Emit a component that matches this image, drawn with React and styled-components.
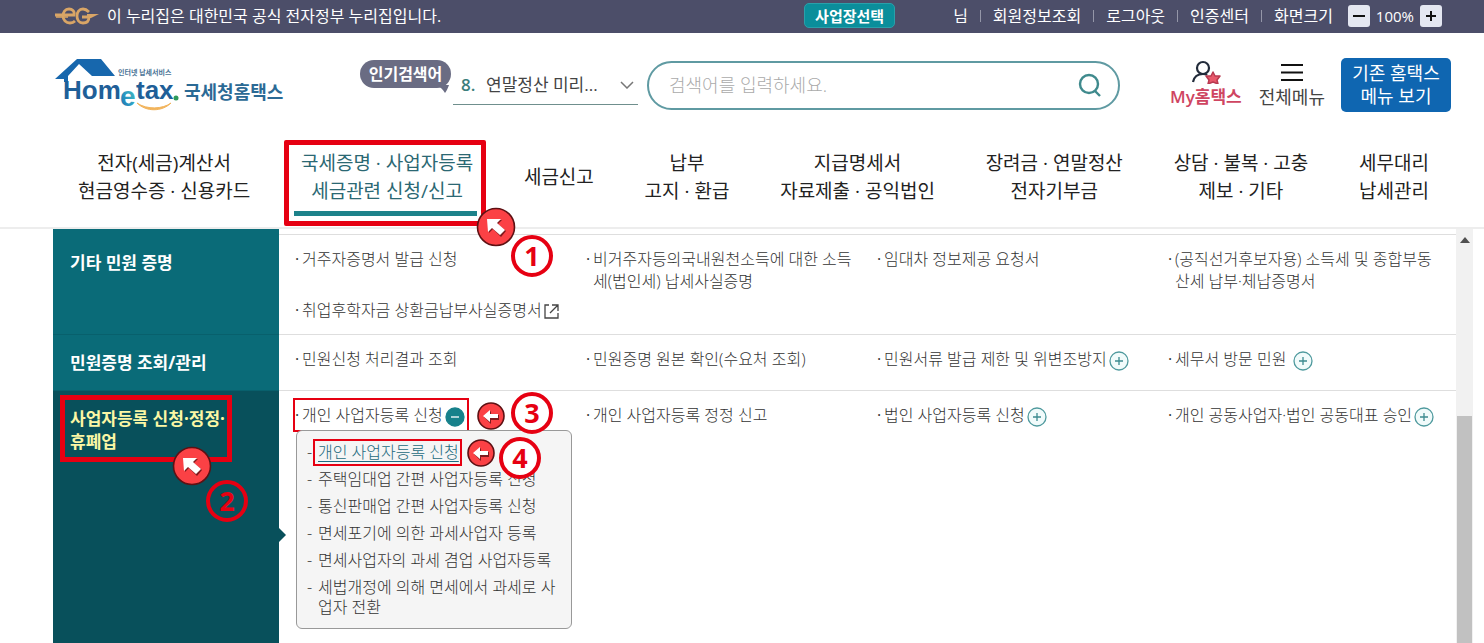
import React from 'react';
import styled, { createGlobalStyle, css } from 'styled-components';

const topLinks = ['회원정보조회', '로그아웃', '인증센터', '화면크기'];

const navItems = [
  { lines: ['전자(세금)계산서', '현금영수증 · 신용카드'] },
  { lines: ['국세증명 · 사업자등록', '세금관련 신청/신고'], active: true },
  { lines: ['세금신고'] },
  { lines: ['납부', '고지 · 환급'] },
  { lines: ['지급명세서', '자료제출 · 공익법인'] },
  { lines: ['장려금 · 연말정산', '전자기부금'] },
  { lines: ['상담 · 불복 · 고충', '제보 · 기타'] },
  { lines: ['세무대리', '납세관리'] },
];

const subItems = [
  '주택임대업 간편 사업자등록 신청',
  '통신판매업 간편 사업자등록 신청',
  '면세포기에 의한 과세사업자 등록',
  '면세사업자의 과세 겸업 사업자등록',
  '세법개정에 의해 면세에서 과세로 사업자 전환',
];

const App = () => {
  return (
    <Page>
      <GlobalStyle />
      <TopBar>
        <EgovMark />
        <TopText>이 누리집은 대한민국 공식 전자정부 누리집입니다.</TopText>
        <PlaceButton type="button">사업장선택</PlaceButton>
        <TopMenu>
          <li>님</li>
          {topLinks.map((text) => (
            <li key={text}>
              <a href="#top">{text}</a>
            </li>
          ))}
        </TopMenu>
        <ZoomBox>
          <ZoomButton type="button" aria-label="화면 축소">
            <svg width="14" height="14" viewBox="0 0 14 14">
              <path d="M1 7h12" stroke="#111" strokeWidth="2" />
            </svg>
          </ZoomButton>
          <span>100%</span>
          <ZoomButton type="button" aria-label="화면 확대">
            <svg width="14" height="14" viewBox="0 0 14 14">
              <path d="M2 7h10M7 2v10" stroke="#111" strokeWidth="2" />
            </svg>
          </ZoomButton>
        </ZoomBox>
      </TopBar>

      <Header>
        <HeaderRow>
          <LogoLink href="#home">
            <HometaxMark />
            <span>국세청홈택스</span>
          </LogoLink>
          <HotLabel htmlFor="hot">
            인기검색어
            <svg width="12" height="8" viewBox="0 0 12 8">
              <path d="M0 0h12c-1 3-2 5-4 8C6 5 4 2 0 1z" fill="#6a6c83" />
            </svg>
          </HotLabel>
          <HotBox>
            <b>8.</b>
            <select id="hot">
              <option>연말정산 미리...</option>
            </select>
            <svg width="14" height="8" viewBox="0 0 14 8">
              <path d="M1 1l6 6 6-6" fill="none" stroke="#777" strokeWidth="1.5" />
            </svg>
          </HotBox>
          <SearchBox>
            <input type="text" aria-label="검색어" placeholder="검색어를 입력하세요." />
            <button type="button" aria-label="검색">
              <svg width="24" height="24" viewBox="0 0 24 24">
                <circle cx="11" cy="11" r="9" fill="none" stroke="#3f8a8d" strokeWidth="2.4" />
                <path d="M17 18l5 5" stroke="#3f8a8d" strokeWidth="2.4" />
              </svg>
            </button>
          </SearchBox>
          <MyLink href="#my" $accent>
            <svg width="30" height="24" viewBox="0 0 30 24">
              <circle cx="12" cy="8" r="6" fill="none" stroke="#222b3a" strokeWidth="2.2" />
              <path d="M2 22c1-5 4-8 10-8 2 0 3 0 4 1" fill="none" stroke="#222b3a" strokeWidth="2.2" />
              <path
                d="M22 12l2 4 5 0-3 4 1 4-5-2-5 2 1-4-3-4 5 0z"
                fill="#e8596b"
                stroke="#b93a50"
                strokeWidth="1.5"
                strokeLinejoin="round"
              />
            </svg>
            My홈택스
          </MyLink>
          <MyLink href="#all">
            <svg width="24" height="24" viewBox="0 0 24 24">
              <path d="M1 5h22M1 12.5h22M1 20h22" stroke="#111" strokeWidth="2" />
            </svg>
            전체메뉴
          </MyLink>
          <OldButton type="button">
            기존 홈택스
            <br />
            메뉴 보기
          </OldButton>
        </HeaderRow>

        <Nav>
          {navItems.map((item) => (
            <NavLink key={item.lines[0]} href="#menu" $active={item.active}>
              {item.lines.map((line) => (
                <span key={line}>{line}</span>
              ))}
              {item.active && (
                <>
                  <NavFrame />
                  <Pin $x={195} $y={78}>
                    <CursorMark />
                  </Pin>
                  <Pin $x={231} $y={107}>
                    <StepNumber>1</StepNumber>
                  </Pin>
                </>
              )}
            </NavLink>
          ))}
        </Nav>
      </Header>

      <Body>
        <Menu>
          <Row>
            <Side $first>기타 민원 증명</Side>
            <Links $first>
              <Item text="거주자증명서 발급 신청" />
              <Item text="비거주자등의국내원천소득에 대한 소득세(법인세) 납세사실증명" />
              <Item text="임대차 정보제공 요청서" />
              <Item text="(공직선거후보자용) 소득세 및 종합부동산세 납부·체납증명서" />
              <Item text="취업후학자금 상환금납부사실증명서">
                <OutIcon />
              </Item>
            </Links>
          </Row>
          <Row>
            <Side>민원증명 조회/관리</Side>
            <Links>
              <Item text="민원신청 처리결과 조회" />
              <Item text="민원증명 원본 확인(수요처 조회)" />
              <Item text="민원서류 발급 제한 및 위변조방지">
                <Toggle />
              </Item>
              <Item text="세무서 방문 민원 ">
                <Toggle />
              </Item>
            </Links>
          </Row>
          <Row $open>
            <Side $active>
              <SideMark>
                사업자등록 신청·정정·
                <br />
                휴폐업
                <SideFrame />
                <Pin $x={122} $y={59}>
                  <CursorMark />
                </Pin>
                <Pin $x={157} $y={94}>
                  <StepNumber>2</StepNumber>
                </Pin>
              </SideMark>
            </Side>
            <Links>
              <Item text="개인 사업자등록 신청">
                <Toggle open />
                <SubMenu>
                  <li>
                    <SubCurrent href="#menu">
                      개인 사업자등록 신청
                      <SubFrame />
                    </SubCurrent>
                    <Pin $x={184} $y={22}>
                      <ArrowMark />
                    </Pin>
                    <Pin $x={223} $y={27}>
                      <StepNumber $filled>4</StepNumber>
                    </Pin>
                  </li>
                  {subItems.map((text) => (
                    <li key={text}>
                      <a href="#menu">{text}</a>
                    </li>
                  ))}
                </SubMenu>
                <ItemFrame />
                <Pin $x={199} $y={12}>
                  <ArrowMark />
                </Pin>
                <Pin $x={240} $y={9}>
                  <StepNumber $filled>3</StepNumber>
                </Pin>
              </Item>
              <Item text="개인 사업자등록 정정 신고" />
              <Item text="법인 사업자등록 신청">
                <Toggle />
              </Item>
              <Item text="개인 공동사업자·법인 공동대표 승인">
                <Toggle />
              </Item>
            </Links>
          </Row>
        </Menu>
        <ScrollBar>
          <svg width="10" height="6" viewBox="0 0 10 6">
            <path d="M5 0l5 6H0z" fill="#505050" />
          </svg>
          <ScrollThumb />
        </ScrollBar>
      </Body>
    </Page>
  );
};

const Item = ({ text, children }) => (
  <ItemBox>
    <a href="#menu">{text}</a>
    {children}
  </ItemBox>
);

const Toggle = ({ open }) => (
  <ToggleButton type="button" aria-label={open ? '하위메뉴 닫기' : '하위메뉴 열기'}>
    <svg width="20" height="20" viewBox="0 0 20 20">
      <circle cx="10" cy="10" r="9" fill={open ? '#17818b' : '#f1fbfb'} stroke={open ? '#17818b' : '#4f9a9e'} strokeWidth="1.3" />
      <path d={open ? 'M6 10h8' : 'M6 10h8M10 6v8'} stroke={open ? '#fff' : '#3c8b90'} strokeWidth="1.3" />
    </svg>
  </ToggleButton>
);

const OutIcon = () => (
  <InlineSvg width="17" height="16" viewBox="0 0 17 16">
    <path d="M6 2H2v13h13v-5M9 2h6v6M15 2L7 10" fill="none" stroke="#444" strokeWidth="1.3" />
  </InlineSvg>
);

const CursorMark = () => (
  <svg width="40" height="40" viewBox="0 0 40 40">
    <circle cx="20" cy="20" r="18.5" fill="#fb4145" stroke="#5e1013" strokeWidth="1.6" />
    <path d="M12 13h14l-4 4 8 7-5 6-8-8-4 4z" fill="#7d1a1e" />
    <path d="M11 12h14l-4 4 8 7-5 5-8-7-4 4z" fill="#fff" />
  </svg>
);

const ArrowMark = () => (
  <svg width="28" height="28" viewBox="0 0 28 28">
    <circle cx="14" cy="14" r="13" fill="#fb4145" stroke="#5e1013" strokeWidth="1.6" />
    <path d="M7 15l7-6v4h8v5h-8v4z" fill="#7d1a1e" />
    <path d="M6 14l7-6v4h8v4h-8v4z" fill="#fff" />
  </svg>
);

const EgovMark = () => (
  <svg width="46" height="20" viewBox="0 0 46 20">
    <g fill="none" stroke="#d9a566" strokeWidth="2.8">
      <path d="M2 9h19c1-4-2-6-5-6-4 0-6 3-6 7s3 7 7 7c2 0 4-1 5-2" />
      <path d="M36 6c-2-2-4-3-6-3-4 0-6 3-6 7s2 7 6 7 6-2 6-6h-7" />
      <path d="M3 11h12" strokeWidth="1.6" />
    </g>
    <path d="M34 8h12l-8 4h-4z" fill="#d9a566" />
  </svg>
);

const HometaxMark = () => (
  <svg width="125" height="58" viewBox="0 0 125 58">
    <defs>
      <linearGradient id="e" x1="0" y1="1" x2="1" y2="0">
        <stop offset="0" stopColor="#1665ab" />
        <stop offset="0.5" stopColor="#2f9fc4" />
        <stop offset="1" stopColor="#4fc3b5" />
      </linearGradient>
    </defs>
    <path d="M0 23L22 3h24l14 17H37L24 8 13 20v6H9v-3z" fill="#1767ad" />
    <text x="63" y="19" fontSize="7" fontWeight="700" fill="#4a7396">
      인터넷 납세서비스
    </text>
    <g fontFamily="Liberation Sans" fontWeight="700" fontSize="26" fill="#1f5f98">
      <text x="8" y="43">Hom</text>
      <text x="81" y="43">tax</text>
      <text x="65" y="50" fontSize="28" fill="url(#e)">
        e
      </text>
    </g>
    <circle cx="121" cy="42" r="2.5" fill="#2d9a5b" />
    <path d="M82 47c9 9 25 9 34 0-8 6-24 7-34 0z" fill="#f2b45c" stroke="#f2b45c" />
  </svg>
);

const GlobalStyle = createGlobalStyle`
  * {
    box-sizing: border-box;
  }

  body {
    margin: 0;
    background: #fff;
    color: #444;
    font-family: 'Open Sans', 'Noto Sans CJK KR', sans-serif;
    font-size: 16px;
  }

  a {
    color: inherit;
    text-decoration: none;
  }

  ul {
    list-style: none;
    margin: 0;
    padding: 0;
  }

  button {
    padding: 0;
    border: 0;
    font-family: inherit;
    cursor: pointer;
  }

  svg {
    flex: none;
  }
`;

const Page = styled.div`
  display: flex;
  flex-direction: column;
  height: 100vh;
  overflow: hidden;
`;

const TopBar = styled.div`
  display: flex;
  align-items: center;
  padding: 0 42px 2px 53px;
  height: 33px;
  flex: none;
  background: #4c4e69;
  color: #fff;
  line-height: 22px;
`;

const TopText = styled.span`
  margin-left: 8px;
`;

const PlaceButton = styled.button`
  margin-left: auto;
  width: 91px;
  height: 25px;
  border: 1px solid #2aa0aa;
  border-radius: 5px;
  background: #0b8e9b;
  color: #fff;
  font-size: 15px;
  font-weight: 700;
  line-height: 22px;
`;

const TopMenu = styled.ul`
  display: flex;
  margin-left: 58px;

  li + li {
    display: flex;
    align-items: center;
  }

  li + li::before {
    content: '';
    width: 1px;
    height: 12px;
    margin: 0 12px;
    background: #9496a8;
  }
`;

const ZoomBox = styled.div`
  display: flex;
  align-items: center;
  gap: 6px;
  margin-left: 15px;
  font-size: 15px;
`;

const ZoomButton = styled.button`
  display: flex;
  align-items: center;
  justify-content: center;
  width: 22px;
  height: 22px;
  border-radius: 3px;
  background: #e4e7f1;
`;

const Header = styled.header`
  flex: none;
  border-bottom: 2px solid #ededed;
`;

const HeaderRow = styled.div`
  display: flex;
  align-items: center;
  height: 54px;
  margin-top: 25px;
  padding: 0 33px 0 55px;
`;

const LogoLink = styled.a`
  display: flex;
  align-items: center;
  gap: 4px;
  width: 305px;
  flex: none;
  color: #2b6a95;
  font-size: 18px;
  font-weight: 700;
  white-space: nowrap;

  span {
    padding-top: 12px;
  }
`;

const HotLabel = styled.label`
  position: relative;
  align-self: flex-start;
  flex: none;
  width: 91px;
  height: 28px;
  margin-top: 2px;
  border-radius: 14px;
  background: #6a6c83;
  color: #fff;
  font-weight: 700;
  line-height: 28px;
  text-align: center;

  svg {
    position: absolute;
    right: 2px;
    bottom: -5px;
  }
`;

const HotBox = styled.div`
  display: flex;
  align-items: center;
  flex: none;
  width: 185px;
  height: 40px;
  margin-left: 2px;
  padding: 0 4px 0 8px;
  border-bottom: 1px solid #6f8f8d;

  b {
    width: 25px;
    color: #3c7f7c;
    font-size: 17px;
    font-weight: 600;
  }

  select {
    flex: 1;
    min-width: 0;
    padding: 0;
    border: 0;
    appearance: none;
    background: none;
    color: #444;
    font-family: inherit;
    font-size: 17px;
  }
`;

const SearchBox = styled.div`
  display: flex;
  align-items: center;
  flex: 1;
  height: 49px;
  margin-left: 9px;
  padding: 0 16px 0 20px;
  border: 2px solid #5f9aa2;
  border-radius: 25px;

  input {
    flex: 1;
    min-width: 0;
    padding: 0;
    border: 0;
    outline: 0;
    background: none;
    font-family: inherit;
    font-size: 18px;
    font-weight: 300;
  }

  input::placeholder {
    color: #aaa;
  }

  button {
    height: 24px;
    background: none;
  }
`;

const MyLink = styled.a`
  display: flex;
  flex-direction: column;
  align-items: center;
  margin-left: 17px;
  color: #444;
  font-size: 18px;
  line-height: 26px;
  white-space: nowrap;

  ${({ $accent }) =>
    $accent &&
    css`
      margin-left: 50px;
      color: #cf4561;
      font-size: 17px;
      font-weight: 600;
    `}
`;

const OldButton = styled.button`
  width: 110px;
  height: 54px;
  margin-left: 16px;
  border-radius: 5px;
  background: #0f66b1;
  color: #fff;
  font-size: 18px;
  line-height: 23px;
`;

const Nav = styled.nav`
  display: flex;
  justify-content: space-between;
  align-items: center;
  margin: 37px 0 22px;
  padding: 0 55px 0 78px;
`;

const NavLink = styled.a`
  position: relative;
  display: flex;
  flex-direction: column;
  align-items: center;
  color: #222;
  font-size: 19px;
  line-height: 28px;
  white-space: nowrap;

  ${({ $active }) =>
    $active &&
    css`
      color: #2b6873;

      &::after {
        content: '';
        position: absolute;
        left: -7px;
        right: -4px;
        bottom: -11px;
        height: 5px;
        background: #1d828a;
      }
    `}
`;

const Frame = styled.i`
  position: absolute;
  border: 2px solid #e60012;
  pointer-events: none;
`;

const NavFrame = styled(Frame)`
  inset: -9px -13px -21px -17px;
  border-width: 5px;
  border-radius: 2px;
`;

const SideFrame = styled(Frame)`
  inset: -12px -7px -9px -10px;
  border-width: 5px;
`;

const ItemFrame = styled(Frame)`
  top: -6px;
  left: 1px;
  width: 176px;
  height: 34px;
`;

const SubFrame = styled(Frame)`
  inset: -2px -3px -3px -5px;
`;

const Pin = styled.span`
  position: absolute;
  left: ${({ $x }) => $x}px;
  top: ${({ $y }) => $y}px;
  z-index: 2;
  display: flex;
  transform: translate(-50%, -50%);
`;

const StepNumber = styled.span`
  display: flex;
  align-items: center;
  justify-content: center;
  width: 42px;
  height: 42px;
  border: 4px solid #e60012;
  border-radius: 50%;
  background: ${({ $filled }) => ($filled ? '#fff' : 'none')};
  color: #e60012;
  font-size: 27px;
  font-weight: 700;
  line-height: 34px;
`;

const Body = styled.main`
  display: flex;
  flex: 1;
  min-height: 0;
  padding: 0 11px 0 53px;
`;

const Menu = styled.div`
  flex: 1;
  min-width: 0;
`;

const Row = styled.section`
  display: flex;
  ${({ $open }) => $open && 'min-height: 289px;'}
`;

const Side = styled.h2`
  position: relative;
  width: 226px;
  flex: none;
  margin: 0;
  padding: ${({ $first }) => ($first ? 22 : 16)}px 0 0 17px;
  border-top: ${({ $first }) => ($first ? 0 : 1)}px solid #08606c;
  background: ${({ $active }) => ($active ? '#08505b' : '#0a6b78')};
  color: ${({ $active }) => ($active ? '#fbf7a5' : '#fff')};
  font-size: 17px;
  font-weight: 700;
  line-height: 23px;

  ${({ $active }) =>
    $active &&
    css`
      &::after {
        content: '';
        position: absolute;
        left: 100%;
        top: 50%;
        margin-top: -7px;
        border: 7px solid transparent;
        border-left-color: #08505b;
        border-right: 0;
      }
    `}
`;

const SideMark = styled.span`
  position: relative;
  display: inline-block;
`;

const Links = styled.ul`
  flex: 1;
  display: grid;
  grid-template-columns: repeat(4, 1fr);
  align-content: start;
  gap: 7px 0;
  margin-top: ${({ $first }) => ($first ? 5 : 0)}px;
  padding: 13px 0 ${({ $first }) => ($first ? 13 : 20)}px 13px;
  border-top: 1px solid #dedede;
`;

const ItemBox = styled.li`
  position: relative;
  padding: 0 18px 0 10px;
  color: #333;
  font-weight: 300;
  line-height: 22px;

  &::before {
    content: '·';
    position: absolute;
    left: 3px;
    font-weight: 400;
  }
`;

const ToggleButton = styled.button`
  height: 20px;
  margin: -4px 0 -4px 2px;
  background: none;
  vertical-align: -6px;

  svg {
    display: block;
  }
`;

const InlineSvg = styled.svg`
  margin: -4px 0 -4px 1px;
  vertical-align: 1px;
`;

const SubMenu = styled.ul`
  position: absolute;
  top: 26px;
  left: 4px;
  z-index: 1;
  display: flex;
  flex-direction: column;
  gap: 7px;
  width: 276px;
  padding: 11px 14px 11px 21px;
  border: 1px solid #999;
  border-radius: 6px;
  background: #f5f5f5;
  line-height: 20px;

  li::before {
    content: '-';
    float: left;
    margin-left: -11px;
  }
`;

const SubCurrent = styled.a`
  position: relative;
  color: #1d6b80;
  text-decoration: underline;
  text-underline-offset: 3px;
`;

const ScrollBar = styled.div`
  display: flex;
  flex-direction: column;
  align-items: center;
  flex: none;
  width: 17px;
  padding-top: 8px;
  background: #f1f1f1;
`;

const ScrollThumb = styled.div`
  flex: 1;
  width: 15px;
  margin-top: 173px;
  background: #c1c1c1;
`;

export default App;
